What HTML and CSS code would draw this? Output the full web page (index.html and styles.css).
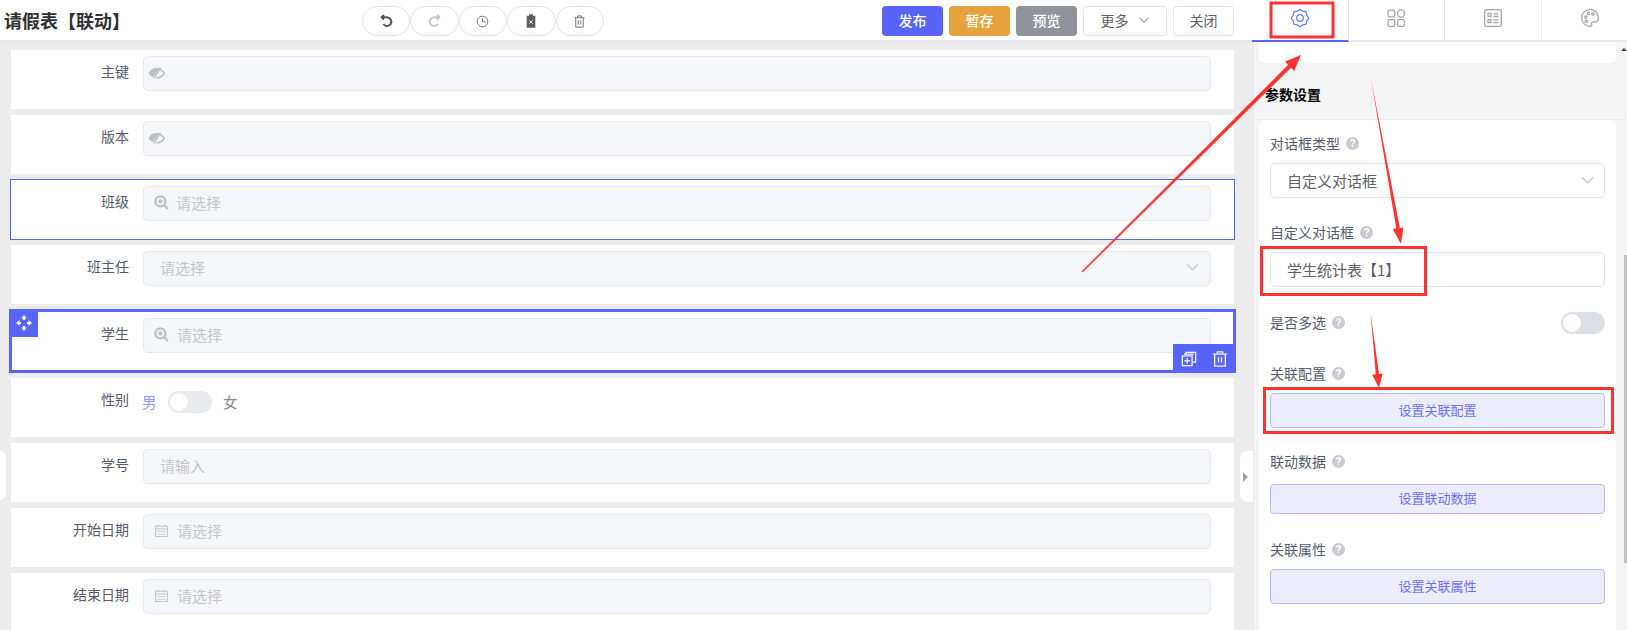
FILE: index.html
```html
<!DOCTYPE html>
<html lang="zh-CN">
<head>
<meta charset="utf-8">
<title>请假表【联动】</title>
<link rel="stylesheet" href="styles.css">
</head>
<body>
<div class="page">
  <header class="topbar">
    <div class="head-left">
      <h1 class="title">请假表【联动】</h1>
      <div class="pills">
        <button class="pill"><svg class="pill-icon dark" viewBox="0 0 24 24"><path d="M9 3 5.500 6.500 9 10M6 6.500h7.500a6.500 6.500 0 1 1-5.500 10"/></svg></button>
        <button class="pill"><svg class="pill-icon faint" viewBox="0 0 24 24"><path d="M15 3 18.500 6.500 15 10M18 6.500h-7.500a6.500 6.500 0 1 0 5.500 10"/></svg></button>
        <button class="pill"><svg class="pill-icon thin" viewBox="0 0 24 24"><circle cx="12" cy="12" r="8.500"/><path d="M12 6.500V12.500H17"/></svg></button>
        <button class="pill"><svg class="pill-icon solid" viewBox="0 0 24 24"><path d="M9 2h6v2h3.500v18h-13V4H9z"/><path class="x" d="M9.500 11l5 5m0-5-5 5"/></svg></button>
        <button class="pill"><svg class="pill-icon thin" viewBox="0 0 24 24"><path d="M4 6h16M9 6V3h6v3M6 6v15h12V6M10 10v7M14 10v7"/></svg></button>
      </div>
      <div class="actions">
        <button class="btn primary">发布</button>
        <button class="btn warn">暂存</button>
        <button class="btn muted">预览</button>
        <button class="btn plain wide">更多<svg class="caret" viewBox="0 0 12 12"><path d="M1.500 3.500 6 8.500l4.500-5"/></svg></button>
        <button class="btn plain">关闭</button>
      </div>
    </div>
    <nav class="tabs">
      <div class="tab active"><svg class="tab-icon" viewBox="0 0 24 24"><polygon points="12,1.500 15.370,3.870 19.400,4.600 20.130,8.630 22.500,12 20.130,15.370 19.400,19.400 15.370,20.130 12,22.500 8.630,20.130 4.600,19.400 3.870,15.370 1.500,12 3.870,8.630 4.600,4.600 8.630,3.870"/><circle cx="12" cy="12" r="4"/></svg></div>
      <div class="tab"><svg class="tab-icon" viewBox="0 0 24 24"><rect x="2.500" y="2.500" width="8" height="8" rx="1.500"/><circle cx="18" cy="6.500" r="4.300"/><rect x="2.500" y="14" width="8" height="8" rx="1.500"/><rect x="14" y="14" width="8" height="8" rx="1.500"/></svg></div>
      <div class="tab"><svg class="tab-icon" viewBox="0 0 24 24"><rect x="2" y="2" width="20" height="20" rx="2"/><rect x="6" y="6.500" width="3.500" height="3.500"/><rect x="6" y="14" width="3.500" height="3.500"/><path d="M12.500 7h6M12.500 10h6M12.500 14.500h6M12.500 17.500h6"/></svg></div>
      <div class="tab"><svg class="tab-icon" viewBox="0 0 24 24"><path d="M12 2a10 10 0 1 0 0 20c2 0 2.500-1.300 2-2.500-.6-1.500.2-3 2-3h3c2 0 3-1.500 3-4.500C22 6 17.500 2 12 2z"/><circle cx="7" cy="11" r="1.500"/><circle cx="10" cy="6.500" r="1.500"/><circle cx="15.500" cy="7" r="1.500"/><circle cx="7.500" cy="16" r="1.500"/></svg></div>
    </nav>
  </header>

  <div class="body-row">
    <main class="canvas">
      <span class="handle-left"></span>
      <section class="item">
        <span class="label">主键</span>
        <div class="field"><svg class="eye" viewBox="0 0 16 11"><path d="M.5 5.500C2.500 2 5 .8 8 .8c1 0 1.900.1 2.700.5L4.500 9.600C2.900 8.800 1.600 7.400.5 5.500z"/><path class="eye-line" d="M11.500 2.500c1.700.8 3 1.800 4 3-1.800 3-4.300 4.600-7.500 4.700M11.800 .5 5.600 10.500"/></svg></div>
      </section>
      <section class="item">
        <span class="label">版本</span>
        <div class="field"><svg class="eye" viewBox="0 0 16 11"><path d="M.5 5.500C2.500 2 5 .8 8 .8c1 0 1.900.1 2.700.5L4.500 9.600C2.900 8.800 1.600 7.400.5 5.500z"/><path class="eye-line" d="M11.500 2.500c1.700.8 3 1.800 4 3-1.800 3-4.300 4.600-7.500 4.700M11.800 .5 5.600 10.500"/></svg></div>
      </section>
      <section class="item hovered">
        <span class="label">班级</span>
        <div class="field"><svg class="lead-icon" viewBox="0 0 16 16"><circle cx="6.800" cy="6.800" r="5.300"/><path d="M4.500 6.800h4.600M6.800 4.500v4.600M10.800 10.800l4 4"/></svg><span class="ph">请选择</span></div>
      </section>
      <section class="item">
        <span class="label">班主任</span>
        <div class="field select"><span class="ph">请选择</span><svg class="chev" viewBox="0 0 14 8"><path d="M1 1l6 6 6-6"/></svg></div>
      </section>
      <section class="item selected">
        <span class="move"><svg viewBox="0 0 16 16"><path d="M8 0l3 3.500H9V5H7V3.500H5zM8 16l-3-3.500h2V11h2v1.500h2zM0 8l3.500-3v2H5v2H3.500v2zM16 8l-3.500 3V9H11V7h1.500V5z"/></svg></span>
        <span class="label">学生</span>
        <div class="field"><svg class="lead-icon" viewBox="0 0 16 16"><circle cx="6.800" cy="6.800" r="5.300"/><path d="M4.500 6.800h4.600M6.800 4.500v4.600M10.800 10.800l4 4"/></svg><span class="ph">请选择</span></div>
        <span class="tools">
          <svg class="tool" viewBox="0 0 18 18"><path d="M5.500 3.500V1.500h11v11h-3"/><path d="M3.500 3.500h10v1M1.500 5.500h11v11h-11z"/><path d="M7 8v6M4 11h6"/></svg>
          <svg class="tool" viewBox="0 0 18 18"><path d="M1 3.500h16M6 3.500V1h6v2.500M3 3.500V17h12V3.500M7.300 7v6M10.700 7v6"/></svg>
        </span>
      </section>
      <section class="item">
        <span class="label">性别</span>
        <div class="radio-row">
          <span class="on-text">男</span>
          <span class="switch soft"><i></i></span>
          <span class="off-text">女</span>
        </div>
      </section>
      <section class="item">
        <span class="label">学号</span>
        <div class="field select"><span class="ph">请输入</span></div>
      </section>
      <section class="item">
        <span class="label">开始日期</span>
        <div class="field"><svg class="lead-icon cal" viewBox="0 0 14 14"><path d="M.7 2.500h12.600v11H.7zM.7 5.500h12.600M3.500 .5v2M10.500 .5v2M3 8h2M6 8h2M9 8h2M3 11h2M6 11h2M9 11h2"/></svg><span class="ph">请选择</span></div>
      </section>
      <section class="item">
        <span class="label">结束日期</span>
        <div class="field"><svg class="lead-icon cal" viewBox="0 0 14 14"><path d="M.7 2.500h12.600v11H.7zM.7 5.500h12.600M3.500 .5v2M10.500 .5v2M3 8h2M6 8h2M9 8h2M3 11h2M6 11h2M9 11h2"/></svg><span class="ph">请选择</span></div>
      </section>
      <span class="handle-right"><i></i></span>
    </main>

    <aside class="panel">
      <div class="panel-inner">
        <div class="stub"></div>
        <h2 class="section-title">参数设置</h2>
        <div class="settings">
          <div class="group">
            <div class="set-label">对话框类型<span class="help">?</span></div>
            <div class="control"><span>自定义对话框</span><svg class="chev" viewBox="0 0 14 8"><path d="M1 1l6 6 6-6"/></svg></div>
          </div>
          <div class="group">
            <div class="set-label">自定义对话框<span class="help">?</span></div>
            <div class="control"><span>学生统计表【1】</span></div>
          </div>
          <div class="group row">
            <div class="set-label">是否多选<span class="help">?</span></div>
            <span class="switch"><i></i></span>
          </div>
          <div class="group after-switch">
            <div class="set-label">关联配置<span class="help">?</span></div>
            <button class="link-btn">设置关联配置</button>
          </div>
          <div class="group tight">
            <div class="set-label low">联动数据<span class="help">?</span></div>
            <button class="link-btn short">设置联动数据</button>
          </div>
          <div class="group">
            <div class="set-label">关联属性<span class="help">?</span></div>
            <button class="link-btn">设置关联属性</button>
          </div>
        </div>
      </div>
      <div class="scrollbar"><span class="sb-arrow"></span><span class="sb-thumb"></span></div>
    </aside>
  </div>

  <svg class="notes" viewBox="0 0 1627 630">
    <rect class="note-box" x="1271" y="3" width="62" height="34"/>
    <rect class="note-box" x="1261.500" y="247.500" width="164" height="47"/>
    <rect class="note-box" x="1264.500" y="388.500" width="348" height="44"/>
    <polygon class="note-arrow" points="1081.500,271.500 1082.500,272.500 1291,67.800 1294.200,71 1301,55 1285,61.600 1288.200,64.800"/>
    <polygon class="note-arrow" points="1371,79 1399.900,228 1403.400,227.400 1401,244 1392.800,229.200 1396.300,228.600"/>
    <polygon class="note-arrow" points="1370.600,313 1379,373.900 1382.600,373.500 1379,388 1372.200,374.700 1375.800,374.300"/>
  </svg>
</div>
</body>
</html>
```
FILE: styles.css
```css
* { box-sizing: border-box; }
html, body { margin: 0; height: 100%; overflow: hidden; }
body { font-family: "Noto Sans CJK SC", "Liberation Sans", sans-serif; font-size: 14px; color: #606266; background: #ececec; }
button { font: inherit; padding: 0; cursor: pointer; }

.page { position: relative; width: 1627px; height: 630px; overflow: hidden; display: flex; flex-direction: column; }

/* top bar */
.topbar { display: flex; height: 42px; flex: none; background: #fff; border-bottom: 2px solid #e6e7ef; }
.head-left { width: 1252px; flex: none; display: flex; align-items: flex-start; padding: 6px 18px 0 4px; }
.title { margin: 0; width: 358px; flex: none; font-size: 18px; line-height: 28px; font-weight: 700; color: #303133; }
.pills { display: flex; }
.pill { width: 48.400px; height: 30px; border: 1px solid #e2e4ec; border-radius: 15px; background: #fff; display: flex; align-items: center; justify-content: center; }
.pill-icon { width: 16px; height: 16px; fill: none; stroke: #555; }
.pill-icon.dark { stroke-width: 3; }
.pill-icon.faint { stroke: #c4c8d0; stroke-width: 3; }
.pill-icon.thin { stroke: #666; stroke-width: 1.400; width: 15px; height: 15px; }
.pill-icon.solid { fill: #606060; stroke: none; }
.pill-icon .x { stroke: #e8e8e8; stroke-width: 1.500; fill: none; }

.actions { margin-left: auto; display: flex; gap: 6px; }
.btn { width: 61px; height: 30px; padding-bottom: 2px; border-radius: 4px; border: 1px solid transparent; color: #fff; font-size: 14px; font-weight: 500; display: flex; align-items: center; justify-content: center; }
.btn.primary { background: #5864f8; }
.btn.warn { background: #e6a23c; }
.btn.muted { background: #909399; }
.btn.plain { background: #fff; border-color: #e2e4ec; color: #606266; font-weight: 400; }
.btn.wide { width: 84px; }
.caret { width: 12px; height: 12px; margin-left: 9px; fill: none; stroke: #777; stroke-width: 1; }

.tabs { flex: 1; display: flex; height: 42px; margin-bottom: -2px; }
.tab { width: 96.500px; height: 42px; flex: none; display: flex; align-items: flex-start; justify-content: center; padding-top: 8px; border-right: 1px solid #e4e5ec; border-bottom: 2px solid #e6e7ef; }
.tab:last-child { flex: 1; border-right: 0; }
.tab.active { border-bottom-color: #5864f8; }
.tab-icon { width: 20px; height: 20px; fill: none; stroke: #a4a4a4; stroke-width: 1.500; }
.tab.active .tab-icon { stroke: #6a78f5; stroke-linejoin: round; }

/* form canvas */
.body-row { flex: 1; display: flex; min-height: 0; }
.canvas { position: relative; width: 1253px; flex: none; padding: 8px 19px 0 11px; display: flex; flex-direction: column; gap: 6px; overflow: hidden; }
.item { position: relative; flex: none; height: 59px; background: #fff; padding: 6px 23px 0 0; display: flex; align-items: flex-start; }
.item.hovered { height: 61px; margin: -1px -1px -1px -1px; border: 1px solid #5864f8; }
.item.selected { height: 64px; margin: -1px -2px -1px -2px; border: 3px solid #5864f8; padding-right: 22px; padding-left: 0; }
.label { width: 118px; flex: none; margin-right: 14px; text-align: right; line-height: 31px; color: #565c6e; }
.item.selected .label { width: 117px; }
.field { flex: 1; height: 35px; display: flex; align-items: center; padding: 0 0 3px 10px; background: #f5f6fa; border: 1px solid #e4e6f0; border-radius: 5px; }
.field.select { padding-left: 16px; }
.ph { font-size: 15px; color: #c3c5cc; }
.eye { width: 17px; height: 12px; margin-left: -6px; margin-top: 1px; fill: #bcbec5; }
.eye-line { fill: none; stroke: #bcbec5; stroke-width: 1.500; }
.lead-icon { width: 15px; height: 15px; margin-right: 7px; fill: none; stroke: #bfc1c8; stroke-width: 2.500; flex: none; }
.item.selected .lead-icon { margin-right: 8px; }
.lead-icon.cal { stroke-width: 1.100; width: 13px; height: 13px; margin-right: 9px; margin-left: 1px; }
.chev { width: 13px; height: 8px; margin-left: auto; margin-right: 11px; fill: none; stroke: #c9cbd3; stroke-width: 1.500; }

.move { position: absolute; left: -3px; top: -3px; width: 29px; height: 28px; background: #5864f8; display: flex; align-items: center; justify-content: center; }
.move svg { width: 16px; height: 16px; fill: #fff; }
.tools { position: absolute; right: -3px; bottom: -3px; width: 63px; height: 29px; background: #5864f8; display: flex; align-items: center; gap: 15px; padding-left: 8px; }
.tool { width: 16px; height: 16px; fill: none; stroke: #fff; stroke-width: 1.500; opacity: .92; }

.radio-row { display: flex; align-items: center; height: 35px; margin-left: -1px; }
.on-text { width: 26px; font-size: 14.500px; color: #9398fb; }
.off-text { margin-left: 11px; font-size: 14.500px; color: #85878c; }
.switch { display: block; position: relative; width: 44px; height: 22px; border-radius: 11px; background: #dcdfe6; flex: none; }
.switch.soft { background: #e9eaee; }
.switch i { position: absolute; left: 2px; top: 2px; width: 18px; height: 18px; border-radius: 50%; background: #fff; }

.handle-left { position: absolute; left: 0; top: 409px; width: 6px; height: 49px; background: #fff; border-radius: 0 8px 8px 0; }
.handle-right { position: absolute; left: 1240px; top: 409px; width: 13px; height: 51px; background: #fff; border-radius: 8px 0 0 8px; display: flex; align-items: center; }
.handle-right i { width: 0; height: 0; margin-left: 3px; border-left: 5px solid #a0a2a8; border-top: 5px solid transparent; border-bottom: 5px solid transparent; }

/* settings panel */
.panel { flex: 1; display: flex; background: #f4f4f4; border-left: 1px solid #e9e9f0; min-width: 0; }
.panel-inner { width: 362px; flex: none; padding: 0 0 0 5px; }
.stub { height: 21px; background: #fff; border-radius: 0 0 5px 5px; }
.section-title { margin: 0 -10px 0 -5px; height: 57px; padding: 21px 0 0 11px; font-size: 14px; line-height: 20px; font-weight: 700; color: #000; border-bottom: 1px solid #ebebf0; }
.settings { height: 520px; background: #fff; border-radius: 5px 5px 0 0; padding: 14px 11px 0; }
.group { margin-bottom: 25px; }
.group.row { display: flex; align-items: center; justify-content: space-between; height: 22px; margin-bottom: 30px; }
.group.after-switch { margin-bottom: 24px; }
.group.tight { margin-bottom: 26px; }
.set-label { height: 20px; padding-bottom: 2px; margin-bottom: 9px; display: flex; align-items: center; color: #565c6e; }
.group.row .set-label { margin-bottom: 0; }
.set-label.low { margin-bottom: 12px; }
.help { width: 13px; height: 13px; margin-left: 6px; border-radius: 50%; background: #c8c9d1; color: #fff; font: 700 10px/13px "Liberation Sans", sans-serif; text-align: center; }
.control { height: 35px; display: flex; align-items: center; padding: 0 0 1px 16px; border: 1px solid #e2e4ec; border-radius: 5px; background: #fff; font-size: 15px; color: #606266; }
.control .chev { stroke: #c8cad2; margin-right: 10px; }
.link-btn { display: block; width: 100%; height: 35px; padding-bottom: 3px; border: 1px solid #b9bbfd; border-radius: 4px; background: #ecedfc; color: #6c70fa; font-size: 13px; }
.link-btn.short { height: 30px; }

.scrollbar { flex: 1; position: relative; display: flex; flex-direction: column; align-items: flex-end; }
.sb-arrow { margin-top: 6px; width: 0; height: 0; border-left: 3px solid transparent; border-right: 3px solid transparent; border-bottom: 3px solid #444; }
.sb-thumb { width: 3px; height: 308px; margin-top: 204px; background: #c1c1c1; }

/* annotations drawn over the screenshot */
.notes { position: absolute; left: 0; top: 0; width: 1627px; height: 630px; pointer-events: none; }
.note-box { fill: none; stroke: #fb3333; stroke-width: 3; }
.note-arrow { fill: #fb3333; }
```
